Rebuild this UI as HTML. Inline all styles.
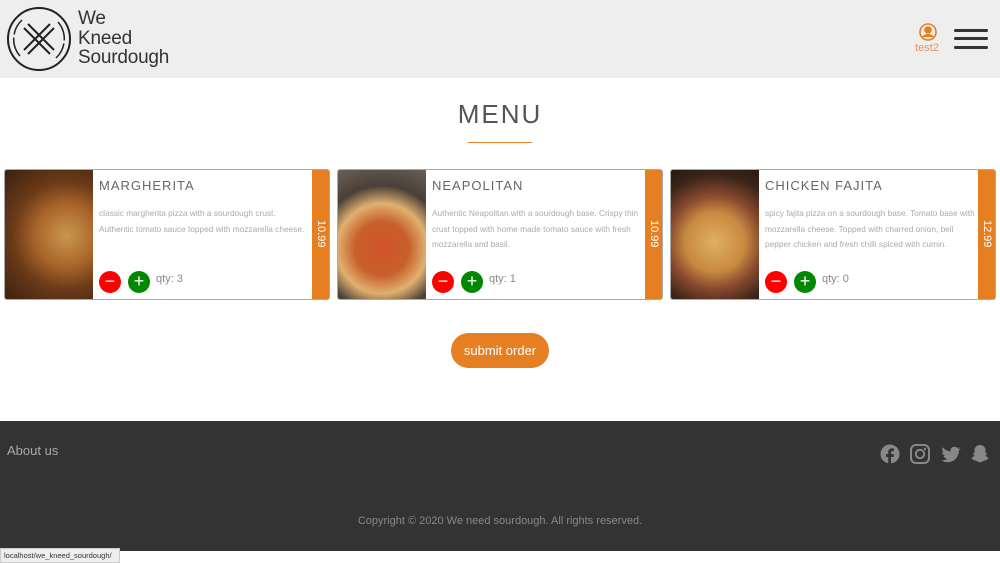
<!DOCTYPE html><html><head><meta charset="utf-8"><style>
*{margin:0;padding:0;box-sizing:border-box}
body{width:1000px;height:563px;overflow:hidden;background:#fff;font-family:"Liberation Sans",sans-serif;position:relative}
.hdr{position:absolute;left:0;top:0;width:1000px;height:78px;background:#eee}
.brand{position:absolute;left:78px;top:9px;font-size:19px;line-height:19.5px;color:#333;letter-spacing:-.2px}
.title{position:absolute;top:99px;width:1000px;text-align:center;font-size:26px;letter-spacing:2px;color:#555}
.uline{position:absolute;left:468px;top:142px;width:64px;height:1px;background:#e67e22}
.card{position:absolute;top:169px;width:326px;height:131px;border:1px solid #aaa;border-radius:3px;overflow:hidden;background:#fff}
.img{position:absolute;left:0;top:0;width:88px;height:131px}
.nm{position:absolute;left:94px;top:8px;font-size:13px;letter-spacing:1px;color:#666}
.ds{position:absolute;left:94px;top:36px;width:212px;font-size:8.3px;line-height:15.5px;color:#aaa}
.price{position:absolute;right:0;top:0;width:17px;height:131px;background:#e67e22;color:#fff}
.price span{position:absolute;left:3px;top:50px;writing-mode:vertical-rl;font-size:11px}
.b{position:absolute;top:101px;width:22px;height:22px;border-radius:50%;color:#fff;text-align:center;font-size:18px;line-height:21px}
.q{position:absolute;left:151px;top:103px;font-size:11px;color:#888}
.btn{position:absolute;left:451px;top:333px;width:98px;height:35px;border-radius:18px;background:#e67e22;color:#fff;font-size:13px;text-align:center;line-height:36px}
.ftr{position:absolute;left:0;top:421px;width:1000px;height:130px;background:#333}
</style></head><body>
<div class="hdr">
<svg style="position:absolute;left:6px;top:6px" width="66" height="66" viewBox="0 0 66 66" fill="none" stroke="#222" stroke-width="2"><circle cx="33" cy="33" r="31"/><path d="M52 16A26 26 0 0 1 50 52M14 50A26 26 0 0 1 16 14" stroke-width="1.5" stroke-dasharray="20 3"/><path d="M18 22L44 48M22 18L48 44M18 44L44 18M22 48L48 22"/></svg>
<div class="brand">We<br>Kneed<br>Sourdough</div>
<svg style="position:absolute;left:919px;top:23px" width="18" height="18" viewBox="0 0 18 18" fill="none" stroke="#e67e22" stroke-width="1.6"><circle cx="9" cy="9" r="8"/><circle cx="9" cy="7" r="3" fill="#e67e22"/><path d="M4 14c2-3 8-3 10 0" fill="#e67e22"/></svg>
<div style="position:absolute;left:915px;top:42px;font-size:11px;color:#e8945a">test2</div>
<div style="position:absolute;left:954px;top:29px;width:34px;height:3px;background:#333;border-radius:2px"></div>
<div style="position:absolute;left:954px;top:37px;width:34px;height:3px;background:#333;border-radius:2px"></div>
<div style="position:absolute;left:954px;top:46px;width:34px;height:3px;background:#333;border-radius:2px"></div>
</div>
<div class="title">MENU</div><div class="uline"></div>

<div class="card" style="left:4px"><div class="img" style="background:radial-gradient(circle at 70% 50%,#c9974e 0,#a8642a 35%,#6b3a18 60%,#3a2010 100%)"></div>
<div class="nm">MARGHERITA</div><div class="ds">classic margherita pizza with a sourdough crust. Authentic tomato sauce topped with mozzarella cheese.</div>
<div class="price"><span>10.99</span></div><div class="b" style="left:94px;background:#f00">−</div><div class="b" style="left:123px;background:#080">+</div><div class="q">qty: 3</div></div>

<div class="card" style="left:337px"><div class="img" style="background:radial-gradient(circle at 50% 60%,#d0532a 0,#c8602c 30%,#e0b070 50%,#4a4038 70%,#6a6058 100%)"></div>
<div class="nm">NEAPOLITAN</div><div class="ds">Authentic Neapolitan with a sourdough base. Crispy thin crust topped with home made tomato sauce with fresh mozzarella and basil.</div>
<div class="price"><span>10.99</span></div><div class="b" style="left:94px;background:#f00">−</div><div class="b" style="left:123px;background:#080">+</div><div class="q">qty: 1</div></div>

<div class="card" style="left:670px"><div class="img" style="background:radial-gradient(circle at 50% 55%,#e0b060 0,#c88a40 35%,#8a4a30 55%,#3a2418 80%,#2a1a10 100%)"></div>
<div class="nm">CHICKEN FAJITA</div><div class="ds">spicy fajita pizza on a sourdough base. Tomato base with mozzarella cheese. Topped with charred onion, bell pepper chicken and fresh chilli spiced with cumin.</div>
<div class="price"><span>12.99</span></div><div class="b" style="left:94px;background:#f00">−</div><div class="b" style="left:123px;background:#080">+</div><div class="q">qty: 0</div></div>

<div class="btn">submit order</div>
<div class="ftr">
<div style="position:absolute;left:7px;top:22px;font-size:13px;color:#aaa">About us</div>
<svg style="position:absolute;left:880px;top:22px" width="110" height="22" viewBox="0 0 110 22" fill="#888"><circle cx="10" cy="11" r="9.5"/><path d="M11 21v-7h2.5l.4-3H11V9.5c0-.8.3-1.4 1.4-1.4H14V5.5c-.3 0-1.2-.1-2.2-.1-2.2 0-3.6 1.3-3.6 3.7V11H6v3h2.2v7z" fill="#333"/><rect x="31" y="2" width="18" height="18" rx="5" fill="none" stroke="#888" stroke-width="2"/><circle cx="40" cy="11" r="4.2" fill="none" stroke="#888" stroke-width="2"/><circle cx="45" cy="6" r="1.2"/><path d="M80 5.5c-.7.3-1.4.5-2.2.6.8-.5 1.4-1.2 1.7-2.1-.7.4-1.5.7-2.4.9-1.5-1.6-4.2-1.6-5.6 0-.9.9-1.2 2.3-.9 3.5-3.1-.2-6-1.7-7.9-4.1-1 1.8-.5 4 1.2 5.1-.6 0-1.2-.2-1.8-.5 0 1.9 1.3 3.5 3.2 3.9-.6.2-1.2.2-1.8.1.5 1.6 2 2.7 3.7 2.7-1.7 1.3-3.9 2-6 1.7 8.6 5.3 18-1 17.6-10 .8-.5 1.4-1.2 1.9-2z"/><path d="M100 2c-3.5 0-5.5 2.5-5.5 5.5v2.5l-1.8.6.2.8 1.6.4c-.5 1.5-1.6 2.7-3.2 3.4.2.7 1.2.9 2 1.1l.4 1.3 2-.1c1 .3 2.3 1.8 4.3 1.8s3.3-1.5 4.3-1.8l2 .1.4-1.3c.8-.2 1.8-.4 2-1.1-1.6-.7-2.7-1.9-3.2-3.4l1.6-.4.2-.8-1.8-.6V7.5C105.5 4.5 103.5 2 100 2z"/></svg>
<div style="position:absolute;left:0;top:94px;width:1000px;text-align:center;font-size:11px;color:#888">Copyright © 2020 We need sourdough. All rights reserved.</div>
</div>
<div style="position:absolute;left:0;top:548px;width:120px;height:15px;padding:0 3px;background:#eee;border:1px solid #ccc;font-size:7.5px;line-height:14px;color:#333;white-space:nowrap;overflow:hidden">localhost/we_kneed_sourdough/</div>
</body></html>
